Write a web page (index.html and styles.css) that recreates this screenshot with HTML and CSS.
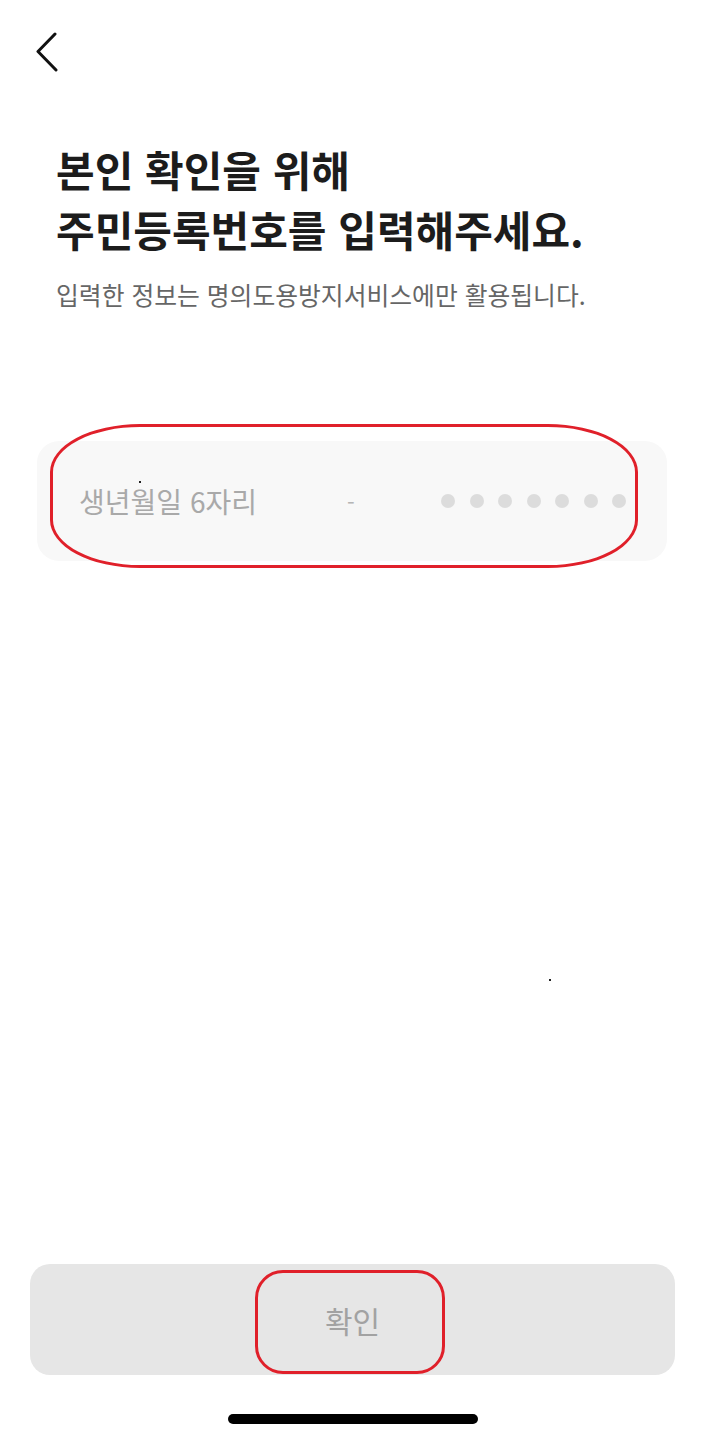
FILE: index.html
```html
<!DOCTYPE html>
<html lang="ko">
<head>
    <meta charset="UTF-8">
    <meta name="viewport" content="width=device-width, initial-scale=1.0">
    <title>본인 확인</title>
    <link rel="stylesheet" href="styles.css">
</head>
<body>
    <div id="page">
        <div id="topbar">
            <div class="icon" id="back">
                <svg width="24" height="40" viewBox="0 0 24 40">
                    <path d="M19 2 L2 19.5 L20 38" fill="none" stroke="#111" stroke-width="3" stroke-linecap="round" stroke-linejoin="round"/>
                </svg>
            </div>
        </div>

        <div id="heading">
            <h1 id="maintext">본인 확인을 위해<br>주민등록번호를 입력해주세요.</h1>
            <p id="secondtext">입력한 정보는 명의도용방지서비스에만 활용됩니다.</p>
        </div>

        <div id="idbox">
            <div class="field">
                <span class="birth">생년월일 6자리</span>
                <span class="dash">-</span>
                <div class="dots">
                    <span></span><span></span><span></span><span></span><span></span><span></span><span></span>
                </div>
            </div>
            <!-- red marker drawn over the field -->
            <div class="mark" id="mark1"></div>
            <span class="speck" id="speck1"></span>
        </div>

        <div id="spacer">
            <span class="speck" id="speck2"></span>
        </div>

        <div id="bottom">
            <button type="button" id="ok">
                확인
                <span class="mark" id="mark2"></span>
            </button>
            <div id="homebar"></div>
        </div>
    </div>
</body>
</html>
```

FILE: styles.css
```css
body {
    margin: 0;
    background-color: #ffffff;
    font-family: "Noto Sans CJK KR", "Noto Sans", sans-serif;
}

#page {
    width: 705px;
    min-height: 1440px;
    display: flex;
    flex-direction: column;
}

/* top bar with back chevron */
#topbar {
    height: 100px;
    padding: 32px 0 0 36px;
    box-sizing: border-box;
}
#back {
    width: 24px;
    height: 40px;
}

/* title + sub text */
#heading {
    padding: 39px 0 0 56px;
}
#maintext {
    margin: 0;
    font-size: 42px;
    line-height: 60px;
    font-weight: 700;
    color: #1c1c1c;
    letter-spacing: 0;
}
#secondtext {
    margin: 19px 0 0 0;
    font-size: 24.8px;
    line-height: 32px;
    color: #666666;
    letter-spacing: 0;
}

/* resident number field */
#idbox {
    position: relative;
    margin: 131px 38px 0 37px;
}
.field {
    height: 120px;
    border-radius: 22px;
    background-color: #f8f8f8;
    display: flex;
    align-items: center;
    padding: 0 41px 0 42px;
}
.birth {
    width: 268px;
    font-size: 28px;
    color: #a9a9a9;
    letter-spacing: 0;
}
.dash {
    font-size: 22px;
    color: #b5b5b5;
}
.dots {
    margin-left: auto;
    display: flex;
    gap: 14.5px;
}
.dots span {
    width: 14px;
    height: 14px;
    border-radius: 50%;
    background-color: #dcdcdc;
}

.mark {
    position: absolute;
    border: 3.5px solid #e0202a;
    box-sizing: border-box;
}
#mark1 {
    left: 13px;
    top: -17px;
    width: 588px;
    height: 144px;
    border-radius: 90px / 48px;
}

.speck {
    position: absolute;
    width: 2px;
    height: 2px;
    background-color: #222;
}
#speck1 {
    left: 102px;
    top: 40px;
}

#spacer {
    flex: 1;
    position: relative;
}
#speck2 {
    left: 549px;
    top: 418px;
}

/* bottom button */
#bottom {
    padding: 0 30px 16px 30px;
}
#ok {
    position: relative;
    display: block;
    width: 100%;
    height: 111px;
    border: none;
    border-radius: 20px;
    background-color: #e6e6e6;
    font-family: "Noto Sans CJK KR", "Noto Sans", sans-serif;
    font-size: 30px;
    color: #a2a2a2;
    padding: 0;
}
#mark2 {
    left: 225px;
    top: 6px;
    width: 190px;
    height: 104px;
    border-radius: 28px;
}
#homebar {
    width: 250px;
    height: 10px;
    margin: 39px auto 0 auto;
    border-radius: 5px;
    background-color: #000000;
}
```
